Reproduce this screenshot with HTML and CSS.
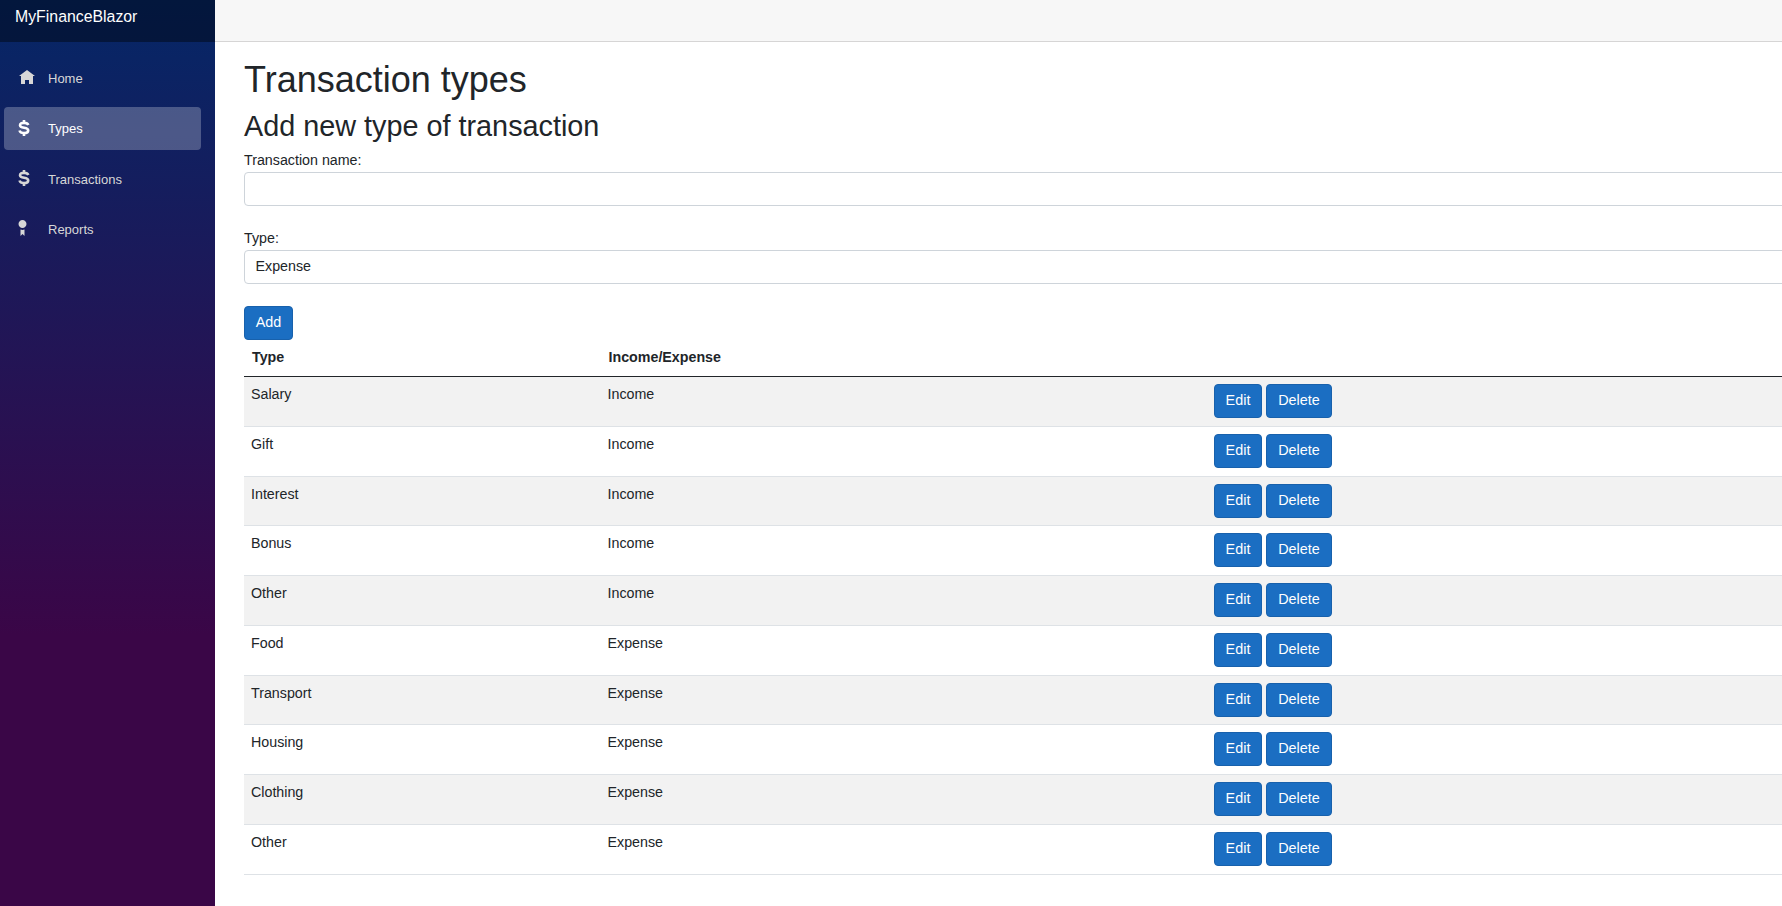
FILE: index.html
```
<!DOCTYPE html>
<html lang="en">
<head>
<meta charset="utf-8">
<title>MyFinanceBlazor</title>
<link rel="stylesheet" href="styles.css">
</head>
<body>
<div class="page">
  <aside class="sidebar">
    <div class="brand">MyFinanceBlazor</div>
    <nav class="nav">
      <a class="nav-link"><svg class="icon" viewBox="0 0 8 8"><path d="M4 0l-4 3h1v4h2v-2h2v2h2v-4.03l1 .03-4-3z"/></svg><span>Home</span></a>
      <a class="nav-link active"><svg class="icon dollar" viewBox="0 0 12 16"><path d="M6 0v3M6 13v3M10.300 5C9.800 3.500 8.300 2.900 6 2.900c-2.500 0-4 .7-4 2.300 0 3.700 8.200 1.600 8.200 5.200 0 1.800-1.700 2.700-4.200 2.700-2.600 0-4-.8-4.500-2.600"/></svg><span>Types</span></a>
      <a class="nav-link"><svg class="icon dollar" viewBox="0 0 12 16"><path d="M6 0v3M6 13v3M10.300 5C9.800 3.500 8.300 2.900 6 2.900c-2.500 0-4 .7-4 2.300 0 3.700 8.200 1.600 8.200 5.200 0 1.800-1.700 2.700-4.200 2.700-2.600 0-4-.8-4.500-2.600"/></svg><span>Transactions</span></a>
      <a class="nav-link"><svg class="icon badge" viewBox="0 0 8 8"><path d="M2 0c-1.100 0-2 .9-2 2s.9 2 2 2 2-.9 2-2-.9-2-2-2zm-1 4.810v3.190l1-1 1 1v-3.190c-.31.11-.65.19-1 .19s-.69-.08-1-.19z"/></svg><span>Reports</span></a>
    </nav>
  </aside>
  <main class="main">
    <div class="top-row"></div>
    <div class="content">
      <h1>Transaction types</h1>
      <h2>Add new type of transaction</h2>
      <div class="field"><div class="label">Transaction name:</div><div class="control"></div></div>
      <div class="field"><div class="label">Type:</div><div class="control">Expense</div></div>
      <button class="btn">Add</button>
      <div class="table">
        <div class="row head"><span>Type</span><span>Income/Expense</span></div>
        <div class="row"><span>Salary</span><span>Income</span><div class="actions"><button class="btn">Edit</button><button class="btn wide">Delete</button></div></div>
        <div class="row"><span>Gift</span><span>Income</span><div class="actions"><button class="btn">Edit</button><button class="btn wide">Delete</button></div></div>
        <div class="row"><span>Interest</span><span>Income</span><div class="actions"><button class="btn">Edit</button><button class="btn wide">Delete</button></div></div>
        <div class="row"><span>Bonus</span><span>Income</span><div class="actions"><button class="btn">Edit</button><button class="btn wide">Delete</button></div></div>
        <div class="row"><span>Other</span><span>Income</span><div class="actions"><button class="btn">Edit</button><button class="btn wide">Delete</button></div></div>
        <div class="row"><span>Food</span><span>Expense</span><div class="actions"><button class="btn">Edit</button><button class="btn wide">Delete</button></div></div>
        <div class="row"><span>Transport</span><span>Expense</span><div class="actions"><button class="btn">Edit</button><button class="btn wide">Delete</button></div></div>
        <div class="row"><span>Housing</span><span>Expense</span><div class="actions"><button class="btn">Edit</button><button class="btn wide">Delete</button></div></div>
        <div class="row"><span>Clothing</span><span>Expense</span><div class="actions"><button class="btn">Edit</button><button class="btn wide">Delete</button></div></div>
        <div class="row"><span>Other</span><span>Expense</span><div class="actions"><button class="btn">Edit</button><button class="btn wide">Delete</button></div></div>
      </div>
    </div>
  </main>
</div>
</body>
</html>
```
FILE: styles.css
```
* { box-sizing: border-box; }
body { margin: 0; overflow: hidden; background: #fff; color: #212529; font-family: "Liberation Sans", Arial, sans-serif; font-size: 14.250px; line-height: 21px; }
.page { display: flex; height: 906px; }
.sidebar { width: 215px; flex: none; background: linear-gradient(180deg, #052767 0%, #3a0647 70%); }
.brand { height: 42px; padding: 5px 0 0 15px; background: rgba(0, 0, 0, .4); color: #fff; font-size: 15.850px; line-height: 24px; }
.nav { display: flex; flex-direction: column; gap: 7.400px; padding: 15px 14px 0 4px; }
.nav-link { display: flex; align-items: center; height: 43px; padding-left: 14px; border-radius: 4px; color: #d7d7d7; font-size: 13px; }
.nav-link span { padding-left: 14px; }
.nav-link.active { background: rgba(255, 255, 255, .25); color: #fff; }
.icon { width: 16px; height: 16px; flex: none; margin: 0 -0.500px 2px 0.500px; fill: currentColor; }
.icon.dollar { width: 12px; margin: 0 4px 2px 0; fill: none; stroke: currentColor; stroke-width: 2.600; }
.icon.badge { width: 17px; margin: 0 -1px 4px 0; }
.main { flex: 1; min-width: 0; overflow: hidden; }
.top-row { height: 42px; background: #f7f7f7; border-bottom: 1px solid #d6d5d5; }
.content { padding: 16px 0 0 29px; }
h1 { margin: 0 0 8px; font-size: 36px; line-height: 43px; font-weight: 400; }
h2 { margin: 0 0 6px; font-size: 28.800px; line-height: 35px; font-weight: 400; }
.field { height: 78px; }
.label { height: 22px; }
.control { width: 1700px; height: 34px; padding: 5px 10.500px; border: 1px solid #ced4da; border-radius: 4px; background: #fff; }
.btn { display: block; width: 49px; height: 34px; padding: 0 0 2px; border: 1px solid #1861ac; border-radius: 4px; background: #1b6ec2; color: #fff; font: 14.400px "Liberation Sans", Arial, sans-serif; }
.row { display: grid; grid-template-columns: 356.500px 605.500px 1fr; height: 49.780px; padding: 7px; border-bottom: 1px solid #dee2e6; }
.row:nth-child(even) { background: #f2f2f2; }
.row.head { height: 37px; padding: 7px 8px; border-color: #212529; font-weight: 700; }
.actions { display: flex; gap: 4px; padding-left: 1px; }
.actions .btn { width: 48px; }
.actions .btn.wide { width: 66px; }
```
